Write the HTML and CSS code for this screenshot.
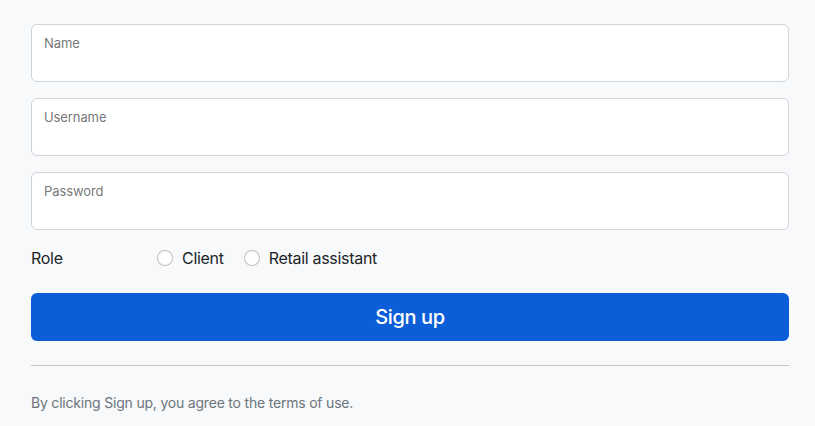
FILE: index.html
```html
<!DOCTYPE html>
<html lang="en">
<head>
<meta charset="utf-8">
<link rel="stylesheet" href="styles.css">
</head>
<body>
<form class="signup">
  <div class="field"><input type="text" id="name"><label for="name">Name</label></div>
  <div class="field"><input type="text" id="username"><label for="username">Username</label></div>
  <div class="field"><input type="password" id="password"><label for="password">Password</label></div>
  <div class="role-row">
    <span class="role-label">Role</span>
    <label class="check"><span class="radio"></span>Client</label>
    <label class="check"><span class="radio"></span>Retail assistant</label>
  </div>
  <button type="button" class="btn">Sign up</button>
  <hr class="divider">
  <p class="terms">By clicking Sign up, you agree to the terms of use.</p>
</form>
</body>
</html>
```
FILE: styles.css
```css
html, body {
  margin: 0;
  padding: 0;
  background: #f8f9fa;
  font-family: Inter, "Liberation Sans", sans-serif;
  color: #212529;
}
.signup {
  width: 758px;
  margin: 0;
  padding: 24px 0 0 31px;
  display: flex;
  flex-direction: column;
}
.field {
  position: relative;
  height: 58px;
  margin-bottom: 16px;
}
.field input {
  box-sizing: border-box;
  width: 100%;
  height: 58px;
  border: 1px solid #ced4da;
  border-radius: 6px;
  background: #fff;
  outline: none;
  font: inherit;
  padding: 26px 12px 8px;
}
.field label {
  position: absolute;
  left: 13px;
  top: 11px;
  font-size: 13px;
  line-height: 16px;
  letter-spacing: -0.1px;
  color: rgba(33, 37, 41, 0.65);
}
.role-row {
  display: flex;
  align-items: center;
  height: 24px;
  font-size: 16px;
  line-height: 24px;
  letter-spacing: -0.3px;
  margin-bottom: 23px;
}
.role-label {
  width: 126px;
}
.check {
  display: flex;
  align-items: center;
  margin-right: 20px;
}
.radio {
  box-sizing: border-box;
  width: 16px;
  height: 16px;
  border: 1px solid rgba(0, 0, 0, 0.25);
  border-radius: 50%;
  background: #fff;
  margin-right: 9px;
}
.btn {
  height: 48px;
  border: none;
  border-radius: 6px;
  background: #0b5ed7;
  color: #fff;
  font-family: inherit;
  font-size: 20px;
  font-weight: 500;
  letter-spacing: -0.4px;
  padding: 0;
}
.divider {
  border: 0;
  border-top: 1px solid #c3c4c5;
  margin: 24px 0 0;
}
.terms {
  margin: 25px 0 0;
  font-size: 14px;
  line-height: 24px;
  letter-spacing: -0.2px;
  color: #6c757d;
}
```
